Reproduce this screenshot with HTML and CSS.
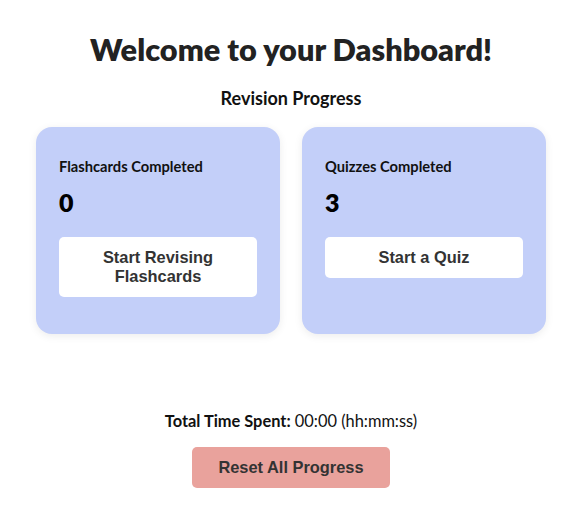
FILE: index.html
```html
<!DOCTYPE html>
<html lang="en">
<head>
<meta charset="utf-8">
<title>Dashboard</title>
<link rel="stylesheet" href="styles.css">
</head>
<body>
<main class="page">
  <h1 class="title">Welcome to your Dashboard!</h1>
  <h2 class="subtitle">Revision Progress</h2>
  <section class="cards">
    <div class="card">
      <h3 class="card-label">Flashcards Completed</h3>
      <p class="card-count">0</p>
      <button class="btn btn-white">Start Revising Flashcards</button>
    </div>
    <div class="card">
      <h3 class="card-label">Quizzes Completed</h3>
      <p class="card-count">3</p>
      <button class="btn btn-white">Start a Quiz</button>
    </div>
  </section>
  <p class="time"><strong>Total Time Spent:</strong> 00:00 (hh:mm:ss)</p>
  <button class="btn btn-reset">Reset All Progress</button>
</main>
</body>
</html>
```
FILE: styles.css
```css
* { box-sizing: border-box; }
body {
  margin: 0;
  background: #ffffff;
  font-family: Lato, "Noto Sans", sans-serif;
  color: #222222;
}
.page {
  width: 582px;
  display: flex;
  flex-direction: column;
  align-items: center;
  padding-top: 30px;
}
.title {
  margin: 0;
  font-size: 30.7px;
  font-weight: 800;
  line-height: 40px;
  color: #222222;
}
.subtitle {
  margin: 16px 0 0;
  font-size: 18px;
  font-weight: 700;
  line-height: 24px;
  color: #111111;
}
.cards {
  display: flex;
  gap: 22px;
  margin-top: 17px;
}
.card {
  width: 244px;
  height: 207px;
  background: #c3cff9;
  border-radius: 16px;
  padding: 29px 23px 23px;
  box-shadow: 0 2px 8px rgba(0,0,0,0.08);
  display: flex;
  flex-direction: column;
  align-items: flex-start;
}
.card-label {
  margin: 0;
  font-size: 14.7px;
  font-weight: 700;
  line-height: 20px;
  color: #111111;
}
.card-count {
  margin: 12px 0 0;
  font-size: 25px;
  font-weight: 800;
  line-height: 28px;
  color: #000000;
}
.btn {
  font-family: "Liberation Sans", Arial, sans-serif;
  font-weight: 700;
  font-size: 16.4px;
  line-height: 19px;
  color: #333333;
  border: none;
  border-radius: 5px;
  width: 198px;
  padding: 11px 16px;
  cursor: pointer;
}
.btn-white {
  background: #ffffff;
  margin-top: 21px;
}
.time {
  margin: 76px 0 0;
  font-size: 16.4px;
  line-height: 22px;
  color: #111111;
}
.btn-reset {
  margin-top: 15px;
  background: #e9a29c;
}
```
